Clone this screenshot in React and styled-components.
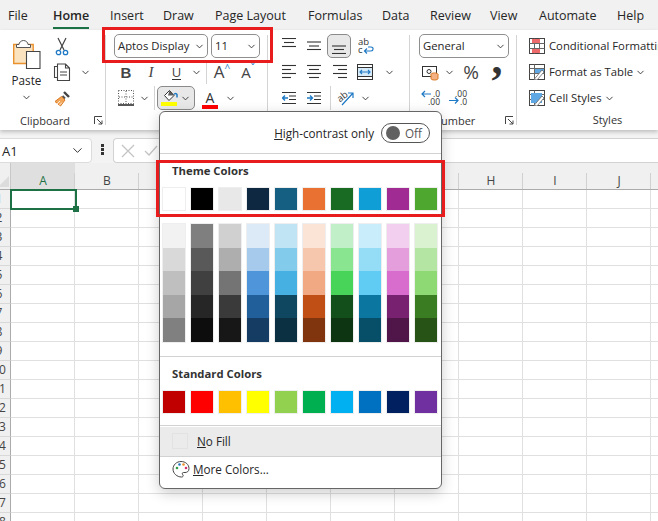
import styled, { createGlobalStyle } from "styled-components";
import { ChevronDown } from "lucide-react";

const GlobalStyle = createGlobalStyle`
  html, body {
    margin: 0;
    padding: 0;
    width: 658px;
    height: 521px;
    overflow: hidden;
    background: #ffffff;
    font-family: "Open Sans", "Liberation Sans", sans-serif;
    color: #262626;
  }
  * { box-sizing: border-box; }
`;

// second value is the slot from this tab's text to the next one's
const TABS = [
  ["File", 45],
  ["Home", 57, true],
  ["Insert", 53],
  ["Draw", 52],
  ["Page Layout", 93],
  ["Formulas", 74],
  ["Data", 48],
  ["Review", 60],
  ["View", 49],
  ["Automate", 78],
  ["Help", 30],
];

const THEME = ["#ffffff", "#000000", "#e8e8e8", "#0e2841", "#156082", "#e97132", "#196b24", "#0f9ed5", "#a02b93", "#4ea72e"];
const SHADES = [
  ["#f2f2f2", "#d9d9d9", "#bfbfbf", "#a6a6a6", "#808080"],
  ["#7f7f7f", "#595959", "#404040", "#262626", "#0d0d0d"],
  ["#d0d0d0", "#aeaeae", "#747474", "#3a3a3a", "#171717"],
  ["#dceaf7", "#a6caec", "#4e95d9", "#215f9a", "#153d64"],
  ["#c1e4f5", "#83cbeb", "#45b0e1", "#0f4761", "#0b3041"],
  ["#fbe3d6", "#f6c6ad", "#f1a983", "#c04f15", "#80350e"],
  ["#c1f0c8", "#8ae590", "#47d459", "#124f1a", "#0d3512"],
  ["#caedfb", "#95dcf7", "#60cbf3", "#0b76a0", "#074f69"],
  ["#f2ceef", "#e59edc", "#d86dcd", "#782170", "#501549"],
  ["#daf2d0", "#b4e5a2", "#8ed973", "#3a7c22", "#275317"],
];
const STANDARD = ["#c00000", "#ff0000", "#ffc000", "#ffff00", "#92d050", "#00b050", "#00b0f0", "#0070c0", "#002060", "#7030a0"];
const COLUMNS = ["A", "B", "C", "D", "E", "F", "G", "H", "I", "J", ""];
const ROWS = Array.from({ length: 18 }, (_, i) => i + 1);

function Chevron() {
  return <ChevronDown size={11} strokeWidth={2} color="#333" />;
}

// rows are [x1, x2, y]
function LinesIcon({ rows }) {
  return (
    <svg width="14" height="16" viewBox="0 0 14 16" fill="none" stroke="#333" strokeWidth="1.1">
      {rows.map(([x1, x2, y], i) => (
        <path key={i} d={`M${x1} ${y}H${x2}`} />
      ))}
    </svg>
  );
}

function PasteIcon() {
  return (
    <svg width="28" height="29" viewBox="0 0 28 29" fill="none">
      <path d="M.7 4.500h19.500v19H.7z" fill="#fbe3bf" stroke="#e8912d" strokeWidth="1.400" />
      <path d="M6 4.500c0-2 2-4 4.500-4s4.500 2 4.500 4h2.500v3H3.500v-3z" fill="#fff" stroke="#555" strokeWidth="1" />
      <path d="M13.500 11.500h13.500v17H13.500z" fill="#fff" stroke="#444" strokeWidth="1.100" />
    </svg>
  );
}

function ScissorsIcon() {
  return (
    <svg width="14" height="19" viewBox="0 0 14 19" fill="none">
      <path d="M3 1l6 12M11 1L5 13" stroke="#444" strokeWidth="1.200" />
      <circle cx="3.500" cy="15.500" r="2.200" stroke="#1f79c4" strokeWidth="1.300" />
      <circle cx="10.500" cy="15.500" r="2.200" stroke="#1f79c4" strokeWidth="1.300" />
    </svg>
  );
}

function CopyIcon() {
  return (
    <svg width="18" height="18" viewBox="0 0 18 18" fill="none" stroke="#444" strokeWidth="1.100">
      <path d="M5 3.500H1.500v11H5" />
      <path d="M4.500 1h8l4 4v12.500h-12zM12.500 1v4h4M7 9h7M7 12h7" />
    </svg>
  );
}

function PainterIcon() {
  return (
    <svg width="17" height="17" viewBox="0 0 17 17" fill="none">
      <path d="M10 2l5 5" stroke="#444" strokeWidth="2.400" />
      <path d="M8.500 6l2.500 2.500" stroke="#555" strokeWidth="2" />
      <path d="M7.500 6.500l3.500 3.500-4.500 6L1 11.500z" fill="#f2a65a" stroke="#d9781f" strokeWidth="1" />
      <path d="M3 14l3-3M5 15.500l3-3" stroke="#fff" strokeWidth=".8" />
    </svg>
  );
}

function BorderIcon() {
  return (
    <svg width="16" height="16" viewBox="0 0 16 16" fill="none">
      <rect x=".5" y=".5" width="15" height="13" stroke="#555" strokeDasharray="1 1.500" />
      <path d="M8 1v12M1 7h14" stroke="#555" strokeDasharray="1 1.500" />
      <path d="M0 15h16" stroke="#111" strokeWidth="1.400" />
    </svg>
  );
}

function FillIcon() {
  return (
    <svg width="18" height="18" viewBox="0 0 18 18" fill="none">
      <path d="M3.500 6.500L8.500 1.500l4.500 5-5 5z" fill="#fff" stroke="#333" strokeWidth="1" />
      <path d="M8.500 1.500l4.500 5H7z" fill="#333" opacity=".8" />
      <path d="M13 5.500c.7-1.500 2.500-1.500 3 0v3" stroke="#1f79c4" strokeWidth="1.500" />
      <rect x="0" y="13" width="16" height="4" fill="#ffff00" />
    </svg>
  );
}

function WrapIcon() {
  return (
    <svg width="18" height="18" viewBox="0 0 18 18" fill="none">
      <text x="1" y="8" fontSize="9.500" fontFamily="Open Sans, sans-serif" fill="#333">ab</text>
      <text x="1" y="16" fontSize="9.500" fontFamily="Open Sans, sans-serif" fill="#333">c</text>
      <path d="M8 14h6c2.500 0 3-4 0-4h-3M10 11.500L7.500 14l2.500 2.500" stroke="#1f79c4" strokeWidth="1.200" />
    </svg>
  );
}

function MergeIcon() {
  return (
    <svg width="16" height="16" viewBox="0 0 16 16" fill="none">
      <rect x=".5" y=".5" width="15" height="15" stroke="#333" />
      <path d="M.5 3.500h15M.5 12.500h15" stroke="#333" />
      <rect x="1" y="4" width="14" height="8" fill="#d6ebf9" />
      <path d="M3 8h10M5 6l-2 2 2 2M11 6l2 2-2 2" stroke="#1f79c4" strokeWidth="1.100" />
    </svg>
  );
}

function IndentIcon({ flip }) {
  return (
    <svg width="14" height="14" viewBox="0 0 14 14" fill="none">
      <path d="M0 1.500h14M7 5h7M7 8.500h7M0 12.500h14" stroke="#333" strokeWidth="1.100" />
      {flip ? (
        <path d="M0 7h5.500M3 4.500L5.500 7 3 9.500" stroke="#1f79c4" strokeWidth="1.400" />
      ) : (
        <path d="M.5 7H6M3 4.500L.5 7 3 9.500" stroke="#1f79c4" strokeWidth="1.400" />
      )}
    </svg>
  );
}

function OrientationIcon() {
  return (
    <svg width="18" height="18" viewBox="0 0 18 18" fill="none">
      <text x="0" y="11" fontSize="9.500" fontFamily="Open Sans, sans-serif" fill="#333" transform="rotate(-38 5 8)">ab</text>
      <path d="M5 16L16 4M11 4h5v5" stroke="#1f79c4" strokeWidth="1.200" />
    </svg>
  );
}

function CurrencyIcon() {
  return (
    <svg width="17" height="17" viewBox="0 0 17 17" fill="none">
      <rect x=".5" y="2.500" width="14" height="10" stroke="#333" />
      <circle cx="7" cy="7.500" r="2" stroke="#333" />
      <ellipse cx="12.500" cy="10.500" rx="3.500" ry="1.600" fill="#f4b183" stroke="#d9781f" />
      <path d="M9 10.500v4c0 2 7 2 7 0v-4" fill="#f4b183" stroke="#d9781f" />
    </svg>
  );
}

function DecimalIcon({ top, bottom, right }) {
  return (
    <svg width="22" height="18" viewBox="0 0 22 18" fill="none">
      <text x="21" y="8" fontSize="8.500" fontFamily="Open Sans, sans-serif" fill="#333" textAnchor="end">{top}</text>
      <text x="21" y="16" fontSize="8.500" fontFamily="Open Sans, sans-serif" fill="#333" textAnchor="end">{bottom}</text>
      {right ? (
        <path d="M3 11.500h9M9 8.500l3 3-3 3" stroke="#1f79c4" strokeWidth="1.200" />
      ) : (
        <path d="M3 5h9M6 2L3 5l3 3" stroke="#1f79c4" strokeWidth="1.200" />
      )}
    </svg>
  );
}

function ConditionalIcon() {
  return (
    <svg width="16" height="16" viewBox="0 0 16 16" fill="none">
      <rect x=".5" y=".5" width="15" height="15" stroke="#444" />
      <path d="M.5 5.500h15M.5 10.500h15M5.500 .5v15M10.500 .5v15" stroke="#666" />
      <rect x="3" y="1" width="8" height="4" fill="#ee6a6a" />
      <rect x="3" y="11" width="8" height="4" fill="#ee6a6a" />
    </svg>
  );
}

function TableIcon({ solid }) {
  return (
    <svg width="16" height="16" viewBox="0 0 16 16" fill="none">
      <rect x=".5" y=".5" width="15" height="15" stroke="#444" />
      <path d="M.5 4.500h15M5.500 .5v15M.5 9.500h15" stroke="#666" />
      <rect x={solid ? 2 : 6} y={solid ? 3 : 5} width={solid ? 11 : 9} height={solid ? 10 : 4} fill="#5fa8e3" />
      <path d="M5 15.500L13 6l2 2-7 8z" fill="#fff" stroke="#666" strokeWidth=".8" />
    </svg>
  );
}

function LauncherIcon() {
  return (
    <svg width="9" height="9" viewBox="0 0 9 9" fill="none" stroke="#444">
      <path d="M.5 8V.5H8M3 3l5 5M8 4.500V8H4.500" />
    </svg>
  );
}

function PaletteIcon() {
  return (
    <svg width="18" height="18" viewBox="0 0 18 18" fill="none">
      <path d="M9 1.500c4.500 0 8 3 8 7 0 3-2 4-4 4h-1.500c-1.500 0-1.500 1.500-.500 2.500.500 1 0 2-1.500 2C5 17 1 13.500 1 9c0-4 3.500-7.500 8-7.500z" fill="#fff" stroke="#444" />
      <circle cx="5" cy="8" r="1.300" fill="#2f9e44" />
      <circle cx="7.500" cy="4.500" r="1.300" fill="#1f79c4" />
      <circle cx="11.500" cy="4.500" r="1.300" fill="#e8912d" />
      <circle cx="14" cy="8" r="1.300" fill="#d6336c" />
    </svg>
  );
}

export default function App() {
  return (
    <Page>
      <GlobalStyle />
      <TabBar>
        {TABS.map(([name, width, active]) => (
          <Tab key={name} $w={width}>
            <TabText $active={active}>{name}</TabText>
          </Tab>
        ))}
      </TabBar>

      <Ribbon>
        <Group $w={106}>
          <ClipboardBody>
            <PasteButton>
              <PasteIcon />
              <PasteLabel>Paste</PasteLabel>
              <Chevron />
            </PasteButton>
            <div>
              <ToolRow><Tool $w={24}><ScissorsIcon /></Tool></ToolRow>
              <ToolRow><Tool $w={24}><CopyIcon /></Tool><Tool $w={22}><Chevron /></Tool></ToolRow>
              <ToolRow><Tool $w={24}><PainterIcon /></Tool></ToolRow>
            </div>
          </ClipboardBody>
          <GroupLabel $shift={16}>Clipboard<Launcher><LauncherIcon /></Launcher></GroupLabel>
        </Group>

        <Group $w={162} $pad={8}>
          <GroupBody>
            <ToolRow>
              <SelectBox $w={94}><span>Aptos Display</span><Chevron /></SelectBox>
              <SelectBox $w={49} $left={3}><span>11</span><Chevron /></SelectBox>
            </ToolRow>
            <ToolRow>
              <Tool $w={24}><BoldMark>B</BoldMark></Tool>
              <Tool $w={26}><ItalicMark>I</ItalicMark></Tool>
              <Tool $w={25}><UnderMark>U</UnderMark></Tool>
              <Tool $w={14}><Chevron /></Tool>
              <RowDivider />
              <Tool $w={26}><GrowMark>A<sup>^</sup></GrowMark></Tool>
              <Tool $w={26}><GrowMark $small>A<sup>ˇ</sup></GrowMark></Tool>
            </ToolRow>
            <ToolRow>
              <Tool $w={23}><BorderIcon /></Tool>
              <Tool $w={14}><Chevron /></Tool>
              <RowDivider />
              <FillButton>
                <FillIcon />
                <Chevron />
              </FillButton>
              <Tool $w={26} $left={2}><ColorMark>A</ColorMark></Tool>
              <Tool $w={14}><Chevron /></Tool>
            </ToolRow>
          </GroupBody>
          <GroupLabel>Font</GroupLabel>
        </Group>

        <Group $w={142} $pad={9}>
          <GroupBody>
            <ToolRow>
              <Tool $w={24}><LinesIcon rows={[[0, 14, 0.5], [2, 12, 4.5], [0, 14, 8.5]]} /></Tool>
              <Tool $w={26}><LinesIcon rows={[[0, 14, 4], [2, 12, 8], [0, 14, 11.5]]} /></Tool>
              <Tool $w={24} $active><LinesIcon rows={[[0, 14, 8], [2, 12, 11.5], [0, 14, 15.5]]} /></Tool>
              <Tool $w={26} $left={2}><WrapIcon /></Tool>
            </ToolRow>
            <ToolRow>
              <Tool $w={24}><LinesIcon rows={[[0, 14, 1.5], [0, 9, 5.5], [0, 14, 9.5], [0, 9, 13.5]]} /></Tool>
              <Tool $w={26}><LinesIcon rows={[[0, 14, 1.5], [2, 12, 5.5], [0, 14, 9.5], [2, 12, 13.5]]} /></Tool>
              <Tool $w={26}><LinesIcon rows={[[0, 14, 1.5], [5, 14, 5.5], [0, 14, 9.5], [5, 14, 13.5]]} /></Tool>
              <Tool $w={24}><MergeIcon /></Tool>
              <Tool $w={24}><Chevron /></Tool>
            </ToolRow>
            <ToolRow>
              <Tool $w={24}><IndentIcon /></Tool>
              <Tool $w={26}><IndentIcon flip /></Tool>
              <RowDivider />
              <Tool $w={26}><OrientationIcon /></Tool>
              <Tool $w={12}><Chevron /></Tool>
            </ToolRow>
          </GroupBody>
          <GroupLabel>Alignment</GroupLabel>
        </Group>

        <Group $w={107} $pad={9}>
          <GroupBody>
            <ToolRow>
              <SelectBox $w={90}><span>General</span><Chevron /></SelectBox>
            </ToolRow>
            <ToolRow>
              <Tool $w={22}><CurrencyIcon /></Tool>
              <Tool $w={16}><Chevron /></Tool>
              <Tool $w={28}><Percent>%</Percent></Tool>
              <Tool $w={24}><Comma>,</Comma></Tool>
            </ToolRow>
            <ToolRow>
              <Tool $w={22}><DecimalIcon top=".0" bottom=".00" /></Tool>
              <Tool $w={22} $left={5}><DecimalIcon top=".00" bottom=".0" right /></Tool>
            </ToolRow>
          </GroupBody>
          <GroupLabel $shift={28}>Number<Launcher><LauncherIcon /></Launcher></GroupLabel>
        </Group>

        <StyleGroup>
          <GroupBody>
            <StyleRow><ConditionalIcon /><span>Conditional Formatting</span></StyleRow>
            <StyleRow><TableIcon /><span>Format as Table</span><Chevron /></StyleRow>
            <StyleRow><TableIcon solid /><span>Cell Styles</span><Chevron /></StyleRow>
          </GroupBody>
          <StyleLabel>Styles</StyleLabel>
        </StyleGroup>
      </Ribbon>

      <FormulaBar>
        <NameBox>
          <span>A1</span>
          <ChevronDown size={15} strokeWidth={1.6} color="#333" />
        </NameBox>
        <GripDots />
        <FormulaInput>
          <svg width="14" height="14" viewBox="0 0 14 14" stroke="#c4c4c4" strokeWidth="1.300"><path d="M1 1l12 12M13 1L1 13" /></svg>
          <svg width="14" height="14" viewBox="0 0 14 14" fill="none" stroke="#c4c4c4" strokeWidth="1.300"><path d="M1 7l4 4 8-9" /></svg>
        </FormulaInput>
      </FormulaBar>

      <Sheet>
        <HeaderRow>
          <Corner />
          {COLUMNS.map((col, i) => (
            <ColumnHead key={i} $selected={col === "A"}>{col}</ColumnHead>
          ))}
        </HeaderRow>
        {ROWS.map((row) => (
          <SheetRow key={row}>
            <RowHead><span>{row}</span></RowHead>
            {COLUMNS.map((_, i) => <Cell key={i} />)}
          </SheetRow>
        ))}
        <Selection />
      </Sheet>

      <ColorMenu>
        <ToggleRow>
          <span><u>H</u>igh-contrast only</span>
          <Toggle><Knob />Off</Toggle>
        </ToggleRow>
        <MenuDivider />
        <SectionTitle>Theme Colors</SectionTitle>
        <SwatchRow>
          {THEME.map((color) => <Swatch key={color} $color={color} />)}
        </SwatchRow>
        <ShadeGrid>
          {SHADES.map((column, i) => (
            <ShadeColumn key={i}>
              {column.map((color) => <Shade key={color} $color={color} />)}
            </ShadeColumn>
          ))}
        </ShadeGrid>
        <MenuDivider />
        <SectionTitle>Standard Colors</SectionTitle>
        <SwatchRow>
          {STANDARD.map((color) => <Swatch key={color} $color={color} />)}
        </SwatchRow>
        <MenuDivider $top={11} />
        <NoFillRow>
          <NoFillBox />
          <span><u>N</u>o Fill</span>
        </NoFillRow>
        <MenuDivider />
        <MoreRow>
          <PaletteIcon />
          <span><u>M</u>ore Colors...</span>
        </MoreRow>
      </ColorMenu>

      <FontHighlight />
      <ThemeHighlight />
    </Page>
  );
}

const Page = styled.div`
  position: relative;
  width: 658px;
  height: 521px;
  overflow: hidden;
  display: flex;
  flex-direction: column;
  font-size: 11.3px;

  svg {
    flex: none;
  }
`;

const TabBar = styled.div`
  height: 30px;
  flex: none;
  display: flex;
  align-items: center;
  background: #f1f1f1;
  padding-left: 8px;
`;

const Tab = styled.div`
  width: ${(p) => p.$w}px;
  flex: none;
  white-space: nowrap;
`;

const TabText = styled.span`
  position: relative;
  font-size: 12.5px;
  font-weight: ${(p) => (p.$active ? 600 : 400)};
  color: #262626;

  ${(p) =>
    p.$active &&
    `&::after {
      content: "";
      position: absolute;
      left: 0;
      right: 0;
      bottom: -5px;
      height: 2px;
      background: #1e7145;
    }`}
`;

const Ribbon = styled.div`
  height: 100px;
  flex: none;
  display: flex;
  background: #ffffff;
  box-shadow: 0 2px 4px rgba(0, 0, 0, 0.22);
  position: relative;
  z-index: 1;
`;

const Group = styled.div`
  width: ${(p) => p.$w}px;
  flex: none;
  padding-left: ${(p) => p.$pad || 0}px;
  display: flex;
  flex-direction: column;
  position: relative;

  &::after {
    content: "";
    position: absolute;
    right: 0;
    top: 5px;
    bottom: 5px;
    width: 1px;
    background: #d4d4d4;
  }
`;

const GroupBody = styled.div`
  height: 81px;
  padding-top: 3px;
  display: flex;
  flex-direction: column;
`;

const ClipboardBody = styled.div`
  height: 81px;
  padding-top: 3px;
  display: flex;
`;

const PasteButton = styled.div`
  width: 50px;
  padding: 7px 0 0 9px;
  display: flex;
  flex-direction: column;
  align-items: center;

  span + svg {
    margin-top: 3px;
    margin-right: 6px;
  }

  svg:first-child {
    margin-left: -5px;
  }
`;

const PasteLabel = styled.span`
  margin-top: 3px;
  margin-right: 6px;
  line-height: 17px;
  font-size: 11.7px;
`;

const ToolRow = styled.div`
  height: 26px;
  display: flex;
  align-items: center;
`;

const Tool = styled.div`
  width: ${(p) => p.$w}px;
  height: 24px;
  flex: none;
  margin-left: ${(p) => p.$left || 0}px;
  display: flex;
  align-items: center;
  justify-content: center;
  ${(p) => p.$active && `background: #e8e8e8; border: 1px solid #8a8a8a; border-radius: 5px;`}
`;

const SelectBox = styled.div`
  width: ${(p) => p.$w}px;
  height: 24px;
  flex: none;
  margin-left: ${(p) => p.$left || 0}px;
  padding: 0 2px 0 3px;
  display: flex;
  align-items: center;
  justify-content: space-between;
  border: 1px solid #8f8f8f;
  border-radius: 5px;
  background: #ffffff;
  white-space: nowrap;

  span {
    margin-top: -2px;
  }
`;

const RowDivider = styled.div`
  width: 1px;
  height: 24px;
  margin: 0 2px 0 3px;
  background: #d4d4d4;
  flex: none;
`;

const GroupLabel = styled.div`
  position: relative;
  height: 18px;
  display: flex;
  align-items: center;
  justify-content: center;
  padding-right: ${(p) => p.$shift || 0}px;
  font-size: 11px;
  color: #333;
`;

const Launcher = styled.span`
  position: absolute;
  right: 3px;
  top: 5px;
  display: flex;
`;

const StyleGroup = styled.div`
  flex: 1;
  min-width: 0;
  display: flex;
  flex-direction: column;
  overflow: hidden;
`;

const StyleRow = styled.div`
  height: 26px;
  display: flex;
  align-items: center;
  gap: 4px;
  white-space: nowrap;
  padding-left: 12px;

  span {
    margin-top: -1px;
  }

  span + svg {
    margin-left: -2px;
  }
`;

const StyleLabel = styled.div`
  height: 18px;
  padding-left: 40px;
  text-align: center;
  line-height: 18px;
  font-size: 11px;
  color: #333;
`;

const BoldMark = styled.span`
  font-family: "Liberation Sans", sans-serif;
  font-size: 15px;
  font-weight: 700;
  color: #444;
`;

const ItalicMark = styled.span`
  font-family: "Liberation Serif", serif;
  font-size: 15px;
  font-style: italic;
  color: #444;
`;

const UnderMark = styled.span`
  font-size: 13px;
  color: #444;
  border-bottom: 1px solid #333;
  line-height: 14px;
`;

const GrowMark = styled.span`
  font-size: ${(p) => (p.$small ? 15 : 17)}px;
  color: #444;
  line-height: 18px;

  sup {
    font-size: 10px;
    color: #1f79c4;
    vertical-align: 6px;
    line-height: 0;
  }
`;

const FillButton = styled.div`
  width: 38px;
  height: 24px;
  flex: none;
  display: flex;
  align-items: center;
  justify-content: space-between;
  padding: 0 3px;
  background: #e8e8e8;
  border: 1px solid #8a8a8a;
  border-radius: 5px;
`;

const ColorMark = styled.span`
  width: 16px;
  text-align: center;
  font-size: 14px;
  line-height: 15px;
  color: #333;
  border-bottom: 4px solid #ff0000;
  margin-top: 2px;
`;

const Percent = styled.span`
  font-size: 19px;
  color: #444;
`;

const Comma = styled.span`
  font-family: "Liberation Serif", serif;
  font-size: 44px;
  font-weight: 700;
  color: #333;
  line-height: 20px;
  margin-top: -24px;
`;

const FormulaBar = styled.div`
  height: 33px;
  flex: none;
  padding-top: 8px;
  display: flex;
  background: #f3f3f3;
`;

const NameBox = styled.div`
  width: 96px;
  height: 25px;
  margin-left: -4px;
  padding: 0 6px 0 5px;
  display: flex;
  align-items: center;
  justify-content: space-between;
  background: #ffffff;
  border: 1px solid #dcdcdc;
  border-radius: 4px;
  font-size: 13px;
`;

const GripDots = styled.div`
  width: 2.500px;
  height: 2.500px;
  margin: 6px 9px 0 9px;
  background: #333;
  box-shadow: 0 4px 0 #333, 0 8px 0 #333;
`;

const FormulaInput = styled.div`
  flex: 1;
  height: 25px;
  display: flex;
  align-items: center;
  gap: 9px;
  padding-left: 7px;
  background: #ffffff;
  border: 1px solid #d2d2d2;
  border-right: none;
  border-radius: 4px 0 0 4px;
`;

const Sheet = styled.div`
  position: relative;
  flex: 1;
  min-height: 0;
  overflow: hidden;
`;

const HeaderRow = styled.div`
  height: 27px;
  display: flex;
  background: #f0f0f0;
  border-bottom: 1px solid #ababab;
`;

const Corner = styled.div`
  width: 11px;
  flex: none;
  position: relative;
  border-right: 1px solid #c8c8c8;

  &::after {
    content: "";
    position: absolute;
    left: -2px;
    bottom: 2px;
    border-style: solid;
    border-width: 0 0 11px 11px;
    border-color: transparent transparent #dcdcdc transparent;
  }
`;

const ColumnHead = styled.div`
  width: 64px;
  flex: none;
  position: relative;
  padding-top: 9px;
  text-align: center;
  font-size: 12px;
  line-height: 17px;
  background: ${(p) => (p.$selected ? "#dfdfdf" : "transparent")};
  color: ${(p) => (p.$selected ? "#1e7145" : "#444")};

  &::after {
    content: "";
    position: absolute;
    right: 0;
    top: 10px;
    bottom: 0;
    width: 1px;
    background: #d0d0d0;
  }
`;

const SheetRow = styled.div`
  height: 19px;
  display: flex;
`;

const RowHead = styled.div`
  width: 11px;
  flex: none;
  overflow: hidden;
  background: #f0f0f0;
  border-right: 1px solid #ababab;
  border-bottom: 1px solid #d8d8d8;
  font-size: 12px;
  line-height: 18px;
  color: #444;

  span {
    display: block;
    width: 24px;
    margin-left: -13px;
    text-align: center;
  }
`;

const Cell = styled.div`
  width: 64px;
  flex: none;
  border-right: 1px solid #e0e0e0;
  border-bottom: 1px solid #e0e0e0;
`;

const Selection = styled.div`
  position: absolute;
  left: 10px;
  top: 26px;
  width: 67px;
  height: 21px;
  border: 2px solid #1e7145;

  &::after {
    content: "";
    position: absolute;
    right: -4px;
    bottom: -4px;
    width: 6px;
    height: 6px;
    background: #1e7145;
  }
`;

const ColorMenu = styled.div`
  position: absolute;
  left: 159px;
  top: 111px;
  width: 283px;
  height: 378px;
  z-index: 2;
  display: flex;
  flex-direction: column;
  background: #ffffff;
  border: 1px solid #666666;
  border-radius: 6px;
  box-shadow: 0 4px 14px rgba(0, 0, 0, 0.2);
  font-size: 11.7px;
`;

const ToggleRow = styled.div`
  height: 41px;
  flex: none;
  display: flex;
  align-items: center;
  justify-content: flex-end;
  gap: 7px;
  padding-right: 11px;
`;

const Toggle = styled.div`
  width: 49px;
  height: 20px;
  display: flex;
  align-items: center;
  gap: 5px;
  padding-left: 4px;
  border: 1px solid #555;
  border-radius: 10px;
  font-size: 11.7px;
  color: #555;
`;

const Knob = styled.div`
  width: 14px;
  height: 14px;
  border-radius: 50%;
  background: #616161;
`;

const MenuDivider = styled.div`
  height: 1px;
  flex: none;
  margin-top: ${(p) => p.$top || 0}px;
  background: #d2d2d2;
`;

const SectionTitle = styled.div`
  height: 33px;
  flex: none;
  padding-left: 12px;
  line-height: 33px;
  font-size: 11.3px;
  font-weight: 700;
  color: #333;
`;

const SwatchRow = styled.div`
  display: grid;
  grid-template-columns: repeat(10, 24px);
  gap: 4px;
  padding-left: 2px;
`;

const Swatch = styled.div`
  height: 24px;
  background: ${(p) => p.$color};
  border: 1px solid #eeeeee;
`;

const ShadeGrid = styled.div`
  display: grid;
  grid-template-columns: repeat(10, 24px);
  gap: 4px;
  padding-left: 2px;
  margin: 12px 0 13px;
`;

const ShadeColumn = styled.div`
  display: flex;
  flex-direction: column;
  border: 1px solid #eeeeee;
`;

const Shade = styled.div`
  height: 23.600px;
  background: ${(p) => p.$color};
`;

const NoFillRow = styled.div`
  height: 29px;
  flex: none;
  display: flex;
  align-items: center;
  gap: 9px;
  padding-left: 12px;
  margin-top: 1px;
  background: #ebebeb;
`;

const NoFillBox = styled.div`
  width: 16px;
  height: 16px;
  border: 1px solid #e2e2e2;
`;

const MoreRow = styled.div`
  flex: 1;
  display: flex;
  align-items: center;
  gap: 3px;
  padding: 0 0 6px 12px;
`;

const FontHighlight = styled.div`
  position: absolute;
  left: 102px;
  top: 27px;
  width: 171px;
  height: 36px;
  z-index: 3;
  border: 3px solid #e81c1c;
`;

const ThemeHighlight = styled.div`
  position: absolute;
  left: 156px;
  top: 160px;
  width: 289px;
  height: 57px;
  z-index: 3;
  border: 3px solid #e81c1c;
`;
